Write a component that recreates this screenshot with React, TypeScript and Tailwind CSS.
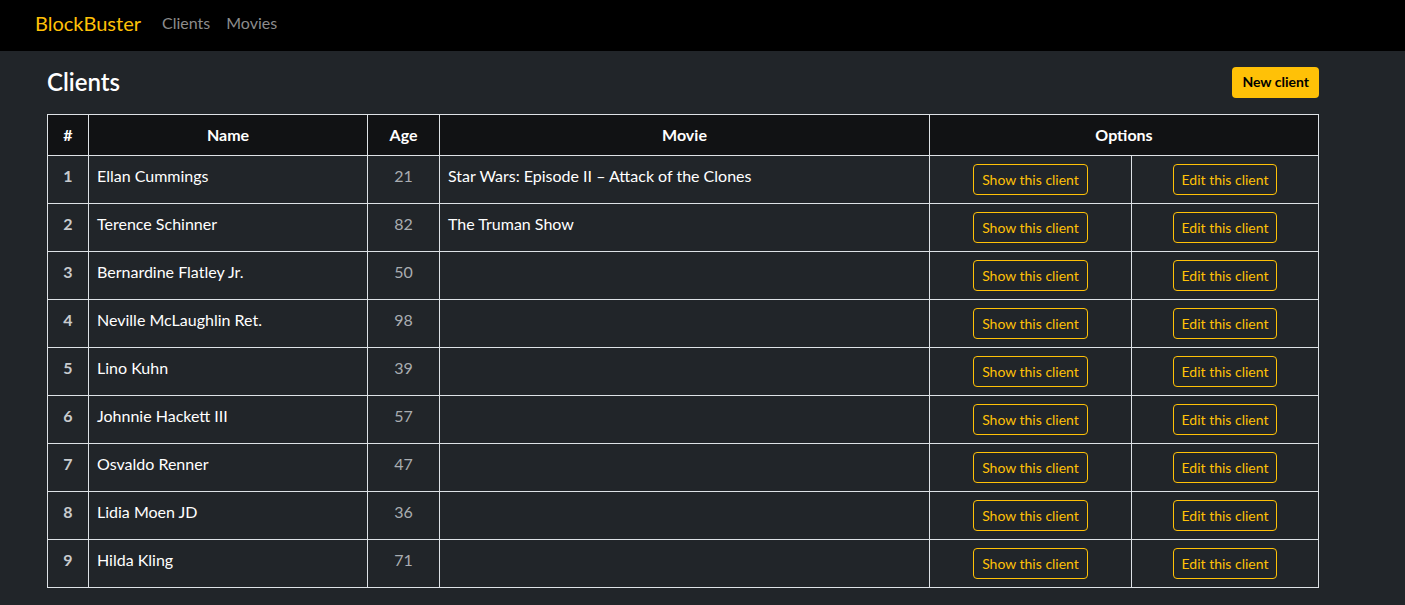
import React from 'react';

const clients = [
  { id: 1, name: 'Ellan Cummings', age: 21, movie: 'Star Wars: Episode II – Attack of the Clones' },
  { id: 2, name: 'Terence Schinner', age: 82, movie: 'The Truman Show' },
  { id: 3, name: 'Bernardine Flatley Jr.', age: 50, movie: '' },
  { id: 4, name: 'Neville McLaughlin Ret.', age: 98, movie: '' },
  { id: 5, name: 'Lino Kuhn', age: 39, movie: '' },
  { id: 6, name: 'Johnnie Hackett III', age: 57, movie: '' },
  { id: 7, name: 'Osvaldo Renner', age: 47, movie: '' },
  { id: 8, name: 'Lidia Moen JD', age: 36, movie: '' },
  { id: 9, name: 'Hilda Kling', age: 71, movie: '' }
];

export default function App() {
  const cell = 'border border-[#dee2e6] px-2 py-2';
  const outlineBtn =
    'inline-block border border-[#ffc107] text-[#ffc107] rounded-[4px] px-2 h-[31px] leading-[29px] text-sm';

  return (
    <div className="min-h-[605px] bg-[#212529] font-['Lato','Liberation_Sans',sans-serif] text-[#dee2e6]">
      <nav className="h-[51px] bg-black flex items-start pt-[9px] pl-[35px]">
        <span className="text-[20px] leading-[28px] text-[#ffc107] mr-[21px]">BlockBuster</span>
        <a className="text-base leading-[28px] text-[#8c8c8c] mr-4">Clients</a>
        <a className="text-base leading-[28px] text-[#8c8c8c]">Movies</a>
      </nav>

      <div className="pl-[47px] w-[1319px]">
        <div className="flex items-center justify-between pt-[15px] pb-[16px]">
          <h1 className="text-[24px] font-semibold text-white leading-[32px]">Clients</h1>
          <button className="bg-[#ffc107] text-black font-bold text-sm rounded-[4px] px-[10px] h-[31px]">
            New client
          </button>
        </div>

        <table className="w-[1272px] border-collapse text-base">
          <thead>
            <tr className="bg-[#111214] text-white font-bold h-[41px]">
              <th className={`${cell} w-[41px] text-center`}>#</th>
              <th className={`${cell} w-[279px] text-center`}>Name</th>
              <th className={`${cell} w-[72px] text-center`}>Age</th>
              <th className={`${cell} w-[490px] text-center`}>Movie</th>
              <th className={`${cell} text-center`} colSpan={2}>Options</th>
            </tr>
          </thead>
          <tbody>
            {clients.map(c => (
              <tr key={c.id} className="h-[48px]">
                <td className={`${cell} align-top text-center font-bold text-[#c8cbce]`}>{c.id}</td>
                <td className={`${cell} align-top text-white`}>{c.name}</td>
                <td className={`${cell} align-top text-center text-[#a9adb1]`}>{c.age}</td>
                <td className={`${cell} align-top text-white`}>{c.movie}</td>
                <td className={`${cell} w-[202px] text-center align-middle`}>
                  <a className={outlineBtn}>Show this client</a>
                </td>
                <td className={`${cell} text-center align-middle`}>
                  <a className={outlineBtn}>Edit this client</a>
                </td>
              </tr>
            ))}
          </tbody>
        </table>
      </div>
    </div>
  );
}
